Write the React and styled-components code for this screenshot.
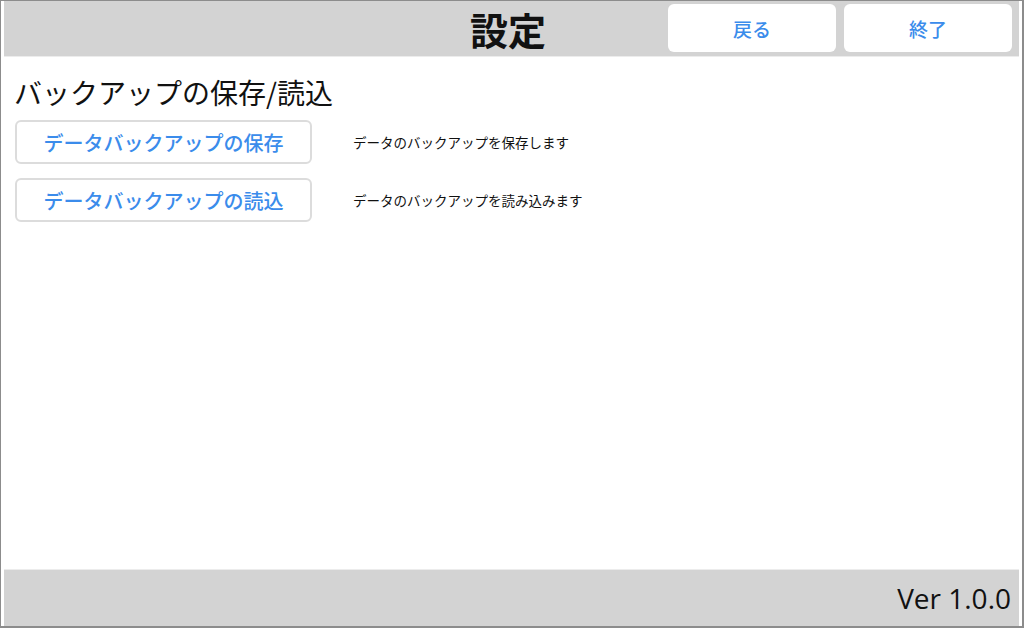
import React from 'react';
import styled, { createGlobalStyle } from 'styled-components';

const GlobalStyle = createGlobalStyle`
  html, body {
    margin: 0;
    padding: 0;
    background: #ffffff;
  }
  body {
    font-family: "Noto Sans CJK JP", "Noto Sans", sans-serif;
  }
`;

const Frame = styled.div`
  width: 1024px;
  height: 628px;
  box-sizing: border-box;
  border-style: solid;
  border-color: #8c8c8c;
  border-width: 1px 2px 2px 1px;
  padding: 0 3px;
  display: flex;
  flex-direction: column;
  background: #fff;
`;

const Header = styled.header`
  height: 55px;
  background: #d3d3d3;
  display: grid;
  grid-template-columns: 1fr auto 1fr;
  align-items: center;
  padding: 0 7px 0 0;
  border-bottom: 1px solid #ececec;
`;

const Title = styled.h1`
  grid-column: 2;
  margin: 0;
  font-size: 38px;
  font-weight: 700;
  color: #111;
  line-height: 1;
`;

const HeaderActions = styled.div`
  grid-column: 3;
  justify-self: end;
  display: flex;
  gap: 8px;
  align-self: start;
  padding-top: 3px;
`;

const HeaderButton = styled.button`
  width: 168px;
  height: 48px;
  border: none;
  border-radius: 6px;
  background: #fff;
  color: #3b8ceb;
  font-family: inherit;
  font-size: 19px;
  font-weight: 500;
  cursor: pointer;
`;

const Main = styled.main`
  flex: 1;
  padding: 16px 11px 0 10px;
`;

const SectionTitle = styled.h2`
  margin: 0 0 9px;
  font-size: 28px;
  font-weight: 400;
  color: #111;
  line-height: 38px;
`;

const List = styled.div`
  display: flex;
  flex-direction: column;
  gap: 14px;
  padding-left: 1px;
`;

const Row = styled.div`
  display: flex;
  align-items: center;
  gap: 41px;
`;

const ActionButton = styled.button`
  width: 297px;
  height: 44px;
  box-sizing: border-box;
  border: 2px solid #dcdcdc;
  border-radius: 6px;
  background: #fff;
  color: #3b8ceb;
  font-family: inherit;
  font-size: 20px;
  font-weight: 500;
  padding: 0;
  cursor: pointer;
`;

const Description = styled.span`
  font-size: 13.5px;
  color: #111;
`;

const Footer = styled.footer`
  height: 56px;
  background: #d3d3d3;
  border-top: 1px solid #ececec;
  display: flex;
  align-items: center;
  justify-content: flex-end;
  padding-right: 8px;
`;

const Version = styled.span`
  font-family: "Open Sans", "Noto Sans", sans-serif;
  font-size: 28px;
  font-weight: 500;
  color: #111;
`;

const actions = [
  { label: 'データバックアップの保存', desc: 'データのバックアップを保存します' },
  { label: 'データバックアップの読込', desc: 'データのバックアップを読み込みます' },
];

const App = () => {
  return (
    <>
      <GlobalStyle />
      <Frame>
        <Header>
          <Title>設定</Title>
          <HeaderActions>
            <HeaderButton>戻る</HeaderButton>
            <HeaderButton>終了</HeaderButton>
          </HeaderActions>
        </Header>
        <Main>
          <SectionTitle>バックアップの保存/読込</SectionTitle>
          <List>
            {actions.map((a) => (
              <Row key={a.label}>
                <ActionButton>{a.label}</ActionButton>
                <Description>{a.desc}</Description>
              </Row>
            ))}
          </List>
        </Main>
        <Footer>
          <Version>Ver 1.0.0</Version>
        </Footer>
      </Frame>
    </>
  );
};

export default App;
